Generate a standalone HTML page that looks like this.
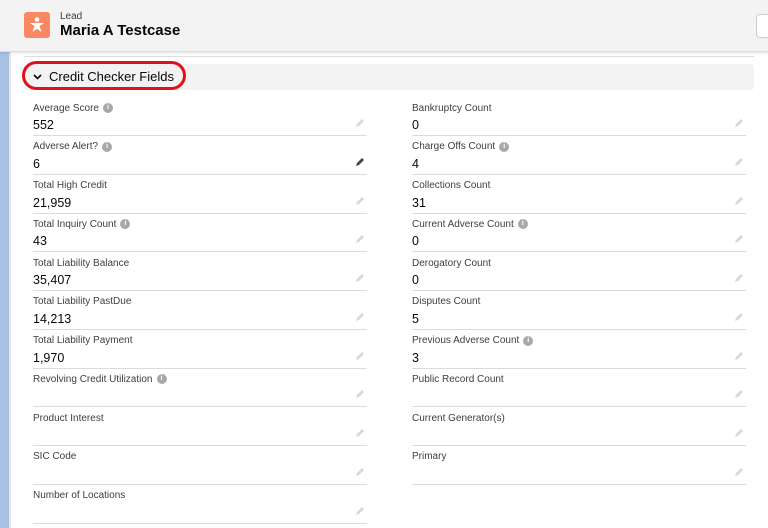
<!DOCTYPE html>
<html><head><style>
*{margin:0;padding:0;box-sizing:border-box}
body{width:768px;height:528px;overflow:hidden;background:#fff;font-family:"Liberation Sans",sans-serif;position:relative}
.hdr{position:absolute;left:0;top:0;width:768px;height:52px;background:#f3f3f3;border-bottom:1px solid #dcdcdc;box-shadow:0 1px 3px rgba(0,0,0,.12);z-index:2}
.ico{position:absolute;left:24px;top:12px;width:26px;height:26px;background:#f88962;border-radius:3px}
.t1{position:absolute;left:60px;top:11px;font-size:10px;color:#3e3e3c}
.t2{position:absolute;left:60px;top:22px;font-size:15px;font-weight:bold;color:#080707}
.btn{position:absolute;left:756px;top:14px;width:20px;height:24px;background:#fff;border:1px solid #ccc;border-radius:4px}
.strip{position:absolute;left:0;top:52px;width:9px;height:476px;background:#a8c1e3}
.strip2{position:absolute;left:9px;top:52px;width:2px;height:476px;background:#e4e4e4}
.topline{position:absolute;left:24px;top:56px;width:730px;border-top:1px solid #ddd}
.sec{position:absolute;left:24px;top:64px;width:730px;height:26px;background:#f3f3f3;border-radius:3px}
.sec span{position:absolute;left:25px;top:5px;font-size:13px;color:#080707}
.oval{position:absolute;left:22px;top:61px;width:164px;height:29px;border:3px solid #e0111a;border-radius:15px}
.f{position:absolute;width:334px;height:38px;border-bottom:1px solid #dddbda}
.f .l{position:absolute;left:0;top:4px;font-size:10px;color:#3e3e3c;display:flex;align-items:center;height:12px}
.f .v{position:absolute;left:0;top:20px;font-size:12.5px;color:#080707}
.f .p{position:absolute;right:2px;top:20px;width:10px;height:10px}
.i{display:inline-block;width:10px;height:10px;border-radius:50%;background:#a8a8a8;color:#fff;font-size:7px;text-align:center;line-height:10px;font-weight:bold;margin-left:4px}
</style></head><body>
<div class="hdr">
<div class="ico"><svg width="26" height="26" viewBox="0 0 26 26"><circle cx="13" cy="7.5" r="2.3" fill="#fff"/><path d="M6 11h14l-4.5 3 2 6-4.5-3.2-4.5 3.2 2-6z" fill="#fff"/></svg></div>
<div class="t1">Lead</div><div class="t2">Maria A Testcase</div>
<div class="btn"></div>
</div>
<div class="strip"></div><div class="strip2"></div>
<div class="topline"></div>
<div class="sec"><svg style="position:absolute;left:9px;top:10px" width="9" height="6" viewBox="0 0 9 6"><path d="M1 1l3.5 3.5L8 1" stroke="#080707" stroke-width="1.6" fill="none"/></svg><span>Credit Checker Fields</span></div>
<div class="oval"></div>
<div id="fs"></div>
<script>
var L=[["Average Score",1,"552"],["Adverse Alert?",1,"6"],["Total High Credit",0,"21,959"],["Total Inquiry Count",1,"43"],["Total Liability Balance",0,"35,407"],["Total Liability PastDue",0,"14,213"],["Total Liability Payment",0,"1,970"],["Revolving Credit Utilization",1,""],["Product Interest",0,""],["SIC Code",0,""],["Number of Locations",0,""]];
var R=[["Bankruptcy Count",0,"0"],["Charge Offs Count",1,"4"],["Collections Count",0,"31"],["Current Adverse Count",1,"0"],["Derogatory Count",0,"0"],["Disputes Count",0,"5"],["Previous Adverse Count",1,"3"],["Public Record Count",0,""],["Current Generator(s)",0,""],["Primary",0,""]];
var h="";
function mk(a,x,dark){for(var k=0;k<a.length;k++){var y=98+k*38.75;var c=(dark&&k==1)?"#444":"#d8d8d8";
h+='<div class="f" style="left:'+x+'px;top:'+y+'px"><div class="l">'+a[k][0]+(a[k][1]?'<span class="i">i</span>':'')+'</div><div class="v">'+a[k][2]+'</div><svg class="p" viewBox="0 0 10 10"><path d="M1 9l1-3 5-5 2 2-5 5z" fill="'+c+'"/></svg></div>';}}
mk(L,33,1);mk(R,412,0);
document.getElementById("fs").innerHTML=h;
</script>
</body></html>
